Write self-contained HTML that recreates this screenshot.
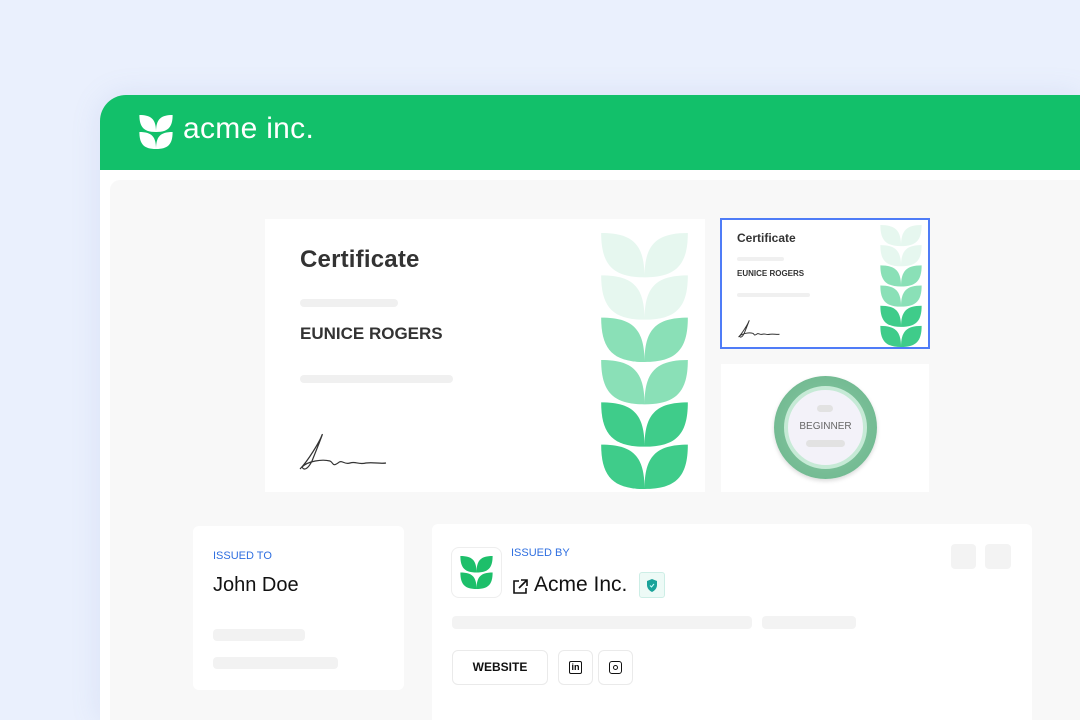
<!DOCTYPE html>
<html style="width:1080px;height:720px;overflow:hidden"><head><meta charset="utf-8"><style>
*{margin:0;padding:0;box-sizing:border-box}
body{width:1080px;height:720px;overflow:hidden;background:#eaf0fd;font-family:"Liberation Sans",sans-serif;position:relative}
.win{position:absolute;left:100px;top:95px;width:980px;height:625px;background:#fff;border-radius:26px 0 0 0;overflow:hidden;box-shadow:0 0 30px rgba(120,140,200,.15)}
.hdr{position:absolute;left:0;top:0;right:0;height:75px;background:#12c06a}
.body{position:absolute;left:10px;top:85px;right:0;bottom:0;background:#f8f8f8;border-radius:10px 0 0 0}
.abs{position:absolute}
.card{position:absolute;background:#fff}
.bar{position:absolute;background:#f0f0f0;border-radius:4px}
</style></head><body>
<svg width="0" height="0" style="position:absolute"><defs>
<g id="lf"><path d="M0 0 C32 0 43 12 43 44 C12 44 0 32 0 0Z"/><path d="M86 0 C54 0 43 12 43 44 C74 44 86 32 86 0Z"/></g>
</defs></svg>
<div class="win">
<div class="hdr">
<svg class="abs" style="left:39px;top:20px" width="34" height="34" viewBox="0 0 86 88" fill="#fff"><use href="#lf"/><use href="#lf" y="44"/></svg>
<div class="abs" style="left:83px;top:17px;color:#fff;font-size:30px;letter-spacing:0.3px">acme inc.</div>
</div>
<div class="body"></div>
</div>
<div class="card" style="left:265px;top:219px;width:440px;height:273px">
<div class="abs" style="left:35px;top:27px;font-size:24px;color:#333;font-weight:bold;letter-spacing:0.2px">Certificate</div>
<div class="bar" style="left:35px;top:80px;width:98px;height:8px"></div>
<div class="abs" style="left:35px;top:105px;font-size:17px;font-weight:bold;color:#333">EUNICE ROGERS</div>
<div class="bar" style="left:35px;top:156px;width:153px;height:8px"></div>
<svg class="abs" style="left:33px;top:212px" width="90" height="42" viewBox="0 0 90 42" fill="none" stroke="#333" stroke-width="1.2"><path d="M2 38 C10 30 22 10 24 4 C26 0 18 20 14 30 C10 38 6 40 4 36 C10 30 24 28 32 30 C36 32 34 36 40 32 C44 28 46 34 52 32 C58 30 60 34 68 32 C76 31 82 33 88 32"/></svg>
<svg class="abs" style="left:336px;top:14px" width="87" height="256" viewBox="0 0 86 254">
<use href="#lf" fill="#e6f7ef"/><use href="#lf" y="42" fill="#e6f7ef"/><use href="#lf" y="84" fill="#8ae0b7"/><use href="#lf" y="126" fill="#8ae0b7"/><use href="#lf" y="168" fill="#3fcc8a"/><use href="#lf" y="210" fill="#3fcc8a"/></svg>
</div>
<div class="card" style="left:720px;top:218px;width:210px;height:131px;border:2px solid #4f7cf7">
<div class="abs" style="left:15px;top:11px;font-size:12px;color:#333;font-weight:bold">Certificate</div>
<div class="bar" style="left:15px;top:37px;width:47px;height:4px"></div>
<div class="abs" style="left:15px;top:49px;font-size:8px;font-weight:bold;color:#333">EUNICE ROGERS</div>
<div class="bar" style="left:15px;top:73px;width:73px;height:4px"></div>
<svg class="abs" style="left:15px;top:99px" width="44" height="20" viewBox="0 0 90 42" fill="none" stroke="#333" stroke-width="2"><path d="M2 38 C10 30 22 10 24 4 C26 0 18 20 14 30 C10 38 6 40 4 36 C10 30 24 28 32 30 C36 32 34 36 40 32 C44 28 46 34 52 32 C58 30 60 34 68 32 C76 31 82 33 88 32"/></svg>
<svg class="abs" style="left:158px;top:5px" width="42" height="122" viewBox="0 0 86 254">
<use href="#lf" fill="#e6f7ef"/><use href="#lf" y="42" fill="#e6f7ef"/><use href="#lf" y="84" fill="#8ae0b7"/><use href="#lf" y="126" fill="#8ae0b7"/><use href="#lf" y="168" fill="#3fcc8a"/><use href="#lf" y="210" fill="#3fcc8a"/></svg>
</div>
<div class="card" style="left:721px;top:364px;width:208px;height:128px">
<div class="abs" style="left:53px;top:12px;width:103px;height:103px;border-radius:50%;background:radial-gradient(circle,#8ccaa6 0,#74bb93 70%,#62ab82 100%);box-shadow:0 2px 4px rgba(0,0,0,.15)"></div>
<div class="abs" style="left:63px;top:22px;width:83px;height:83px;border-radius:50%;background:#f3f2f9;border:4px solid #c6ead6"></div>
<div class="bar" style="left:96px;top:41px;width:16px;height:7px;background:#e2e2e2"></div>
<div class="abs" style="left:60px;top:57px;width:89px;text-align:center;font-size:10px;color:#666">BEGINNER</div>
<div class="bar" style="left:85px;top:76px;width:39px;height:7px;background:#e2e2e2"></div>
</div>
<div class="card" style="left:193px;top:526px;width:211px;height:164px;border-radius:6px">
<div class="abs" style="left:20px;top:24px;font-size:11px;color:#2f6fe0">ISSUED TO</div>
<div class="abs" style="left:20px;top:48px;font-size:20px;color:#111">John Doe</div>
<div class="bar" style="left:20px;top:103px;width:92px;height:12px;background:#f2f2f2"></div>
<div class="bar" style="left:20px;top:131px;width:125px;height:12px;background:#f2f2f2"></div>
</div>
<div class="card" style="left:432px;top:524px;width:600px;height:210px;border-radius:6px">
<div class="abs" style="left:19px;top:23px;width:51px;height:51px;border:1px solid #eee;border-radius:8px"></div>
<svg class="abs" style="left:28px;top:32px" width="33" height="33" viewBox="0 0 86 88" fill="#1dbf6a"><use href="#lf"/><use href="#lf" y="44"/></svg>
<div class="abs" style="left:79px;top:23px;font-size:11px;color:#2f6fe0">ISSUED BY</div>
<svg class="abs" style="left:80px;top:55px" width="16" height="16" viewBox="0 0 16 16" fill="none" stroke="#111" stroke-width="1.6"><path d="M7 2H2v12h12V9M9 1h6v6M15 1L7 9"/></svg>
<div class="abs" style="left:102px;top:49px;font-size:21px;color:#111">Acme Inc.</div>
<div class="abs" style="left:207px;top:48px;width:26px;height:26px;border:1px solid #cdeee6;background:#edfaf6;border-radius:3px"></div>
<svg class="abs" style="left:214px;top:55px" width="12" height="13" viewBox="0 0 12 13"><path d="M6 0L11 2V6C11 9 9 11.5 6 13C3 11.5 1 9 1 6V2Z" fill="#1aa39a"/><path d="M4 6.5L5.5 8L8 5" stroke="#cff" stroke-width="1" fill="none"/></svg>
<div class="bar" style="left:519px;top:20px;width:25px;height:25px;background:#f3f3f3"></div>
<div class="bar" style="left:553px;top:20px;width:26px;height:25px;background:#f3f3f3"></div>
<div class="bar" style="left:20px;top:92px;width:300px;height:13px;background:#f3f3f3"></div>
<div class="bar" style="left:330px;top:92px;width:94px;height:13px;background:#f3f3f3"></div>
<div class="abs" style="left:20px;top:126px;width:96px;height:35px;border:1px solid #eaeaea;border-radius:6px;text-align:center;line-height:33px;font-size:12px;color:#111;font-weight:bold">WEBSITE</div>
<div class="abs" style="left:126px;top:126px;width:35px;height:35px;border:1px solid #eaeaea;border-radius:6px"></div>
<div class="abs" style="left:137px;top:137px;width:13px;height:13px;border:1.3px solid #111;border-radius:2px;font-size:9px;line-height:10px;text-align:center;font-weight:bold">in</div>
<div class="abs" style="left:166px;top:126px;width:35px;height:35px;border:1px solid #eaeaea;border-radius:6px"></div>
<div class="abs" style="left:177px;top:137px;width:13px;height:13px;border:1.3px solid #111;border-radius:3px"></div>
<div class="abs" style="left:181px;top:141px;width:5px;height:5px;border:1.2px solid #111;border-radius:50%"></div>
</div>
</body></html>
